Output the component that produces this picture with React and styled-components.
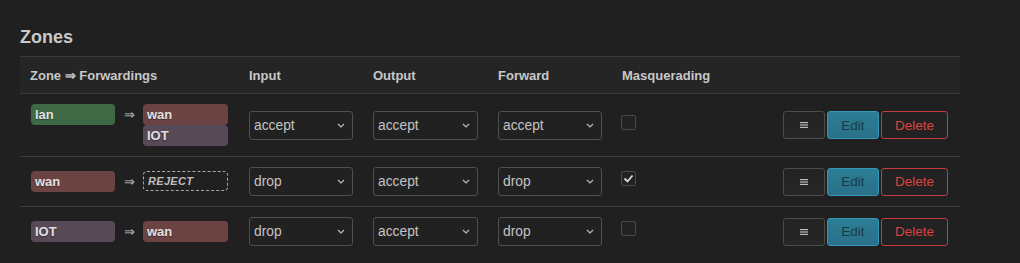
import React from "react";
import styled, { createGlobalStyle } from "styled-components";

const GlobalStyle = createGlobalStyle`
  html, body {
    margin: 0;
    padding: 0;
    background: #202020;
    font-family: "Liberation Sans", Arial, sans-serif;
    color: #ccc;
  }
`

const Page = styled.div`
  padding: 26px 60px 0 20px;
  width: 940px;
`

const Heading = styled.h3`
  margin: 0 0 8px 0;
  font-size: 18px;
  font-weight: bold;
  color: #c9c9c9;
  line-height: 22px;
`

const Table = styled.div`
  display: grid;
  grid-template-columns: 219px 124px 125px 124px 150px 1fr;
  border-top: 1px solid #3b3b3b;
`

const HeadCell = styled.div`
  background: #252525;
  height: 36px;
  display: flex;
  align-items: center;
  padding-left: 10px;
  font-size: 13px;
  font-weight: bold;
  color: #c8c8c8;
  border-bottom: 1px solid #3b3b3b;
`

const Cell = styled.div`
  display: flex;
  align-items: center;
  padding: 10px 0 10px 10px;
  border-bottom: ${p => (p.$last ? "none" : "1px solid #3b3b3b")};
  justify-content: ${p => (p.$right ? "flex-end" : "flex-start")};
  padding-right: ${p => (p.$right ? "12px" : "0")};
`

const Forward = styled.div`
  display: flex;
  align-items: flex-start;
  margin-left: 1px;
`

const Badge = styled.div`
  width: ${p => p.$w || 84}px;
  height: 21px;
  box-sizing: border-box;
  border-radius: 4px;
  background: ${p => p.$color};
  color: #e0e0e0;
  font-size: 13px;
  font-weight: bold;
  padding-left: 4px;
  display: flex;
  align-items: center;
  text-shadow: 0 1px 1px rgba(0, 0, 0, 0.35);
`

const Arrow = styled.span`
  width: 28px;
  text-align: center;
  font-size: 13px;
  color: #bbb;
  line-height: 21px;
`

const Stack = styled.div`
  display: flex;
  flex-direction: column;
`

const Reject = styled.div`
  width: 85px;
  height: 20px;
  box-sizing: border-box;
  border: 1px dashed #a8a8a8;
  border-radius: 4px;
  font-size: 11px;
  font-style: italic;
  font-weight: bold;
  color: #bdbdbd;
  padding-left: 4px;
  display: flex;
  align-items: center;
  letter-spacing: 0.3px;
`

const SelectBox = styled.div`
  width: ${p => p.$w || 104}px;
  height: 29px;
  box-sizing: border-box;
  border: 1px solid #4f4f4f;
  border-radius: 3px;
  background: #212121;
  display: flex;
  align-items: center;
  justify-content: space-between;
  padding: 0 7px 0 4px;
  font-size: 13.8px;
  color: #c4c4c4;
`

const Check = styled.div`
  width: 15px;
  height: 15px;
  box-sizing: border-box;
  border: 1px solid #4a4a4a;
  border-radius: 2px;
  background: #222;
  display: flex;
  align-items: center;
  justify-content: center;
  margin-top: -6px;
  margin-left: -1px;
`

const Buttons = styled.div`
  display: flex;
  gap: 2px;
`

const Button = styled.button`
  height: 28px;
  box-sizing: border-box;
  border-radius: 3px;
  font-family: "Liberation Sans", Arial, sans-serif;
  font-size: 13.5px;
  padding: 0;
  width: ${p => p.$w}px;
  border: 1px solid ${p => p.$border};
  background: ${p => p.$bg};
  color: ${p => p.$fg};
  display: flex;
  align-items: center;
  justify-content: center;
`

const Chevron = () => (
  <svg width="8" height="5" viewBox="0 0 8 5">
    <path d="M1 1l3 3 3-3" fill="none" stroke="#bbb" strokeWidth="1.2" />
  </svg>
)

const Tick = () => (
  <svg width="11" height="9" viewBox="0 0 11 9">
    <path d="M1.5 4.5l3 3 5-6" fill="none" stroke="#d8d8d8" strokeWidth="1.8" />
  </svg>
)

const MenuIcon = () => (
  <svg width="8" height="6" viewBox="0 0 8 6">
    <rect x="0" y="0" width="8" height="1.2" fill="#bbb" />
    <rect x="0" y="2.4" width="8" height="1.2" fill="#bbb" />
    <rect x="0" y="4.8" width="8" height="1.2" fill="#bbb" />
  </svg>
)

const Select = ({ value, w }) => (
  <SelectBox $w={w}>
    {value}
    <Chevron />
  </SelectBox>
)

const zoneColors = {
  lan: "#3e6944",
  wan: "#6b4343",
  IOT: "#574a56",
}

const rows = [
  { zone: "lan", fwd: ["wan", "IOT"], input: "accept", output: "accept", forward: "accept", masq: false },
  { zone: "wan", fwd: null, input: "drop", output: "accept", forward: "drop", masq: true },
  { zone: "IOT", fwd: ["wan"], input: "drop", output: "accept", forward: "drop", masq: false },
]

const Actions = () => (
  <Buttons>
    <Button $w={42} $border="#4c4c4c" $bg="linear-gradient(#232323, #262626)" $fg="#ccc">
      <MenuIcon />
    </Button>
    <Button $w={52} $border="#3598b8" $bg="linear-gradient(#2b7e96, #2a7089)" $fg="#1b3a46">
      Edit
    </Button>
    <Button $w={67} $border="#c43c3c" $bg="#222" $fg="#d84545">
      Delete
    </Button>
  </Buttons>
)

export default function App() {
  return (
    <>
      <GlobalStyle />
      <Page>
        <Heading>Zones</Heading>
        <Table>
          <HeadCell>Zone ⇒ Forwardings</HeadCell>
          <HeadCell>Input</HeadCell>
          <HeadCell>Output</HeadCell>
          <HeadCell>Forward</HeadCell>
          <HeadCell>Masquerading</HeadCell>
          <HeadCell />
          {rows.map((r, i) => {
            const last = i === rows.length - 1
            return (
              <React.Fragment key={i}>
                <Cell $last={last}>
                  <Forward>
                    <Badge $color={zoneColors[r.zone]}>{r.zone}</Badge>
                    <Arrow>⇒</Arrow>
                    {r.fwd ? (
                      <Stack>
                        {r.fwd.map(f => (
                          <Badge key={f} $w={85} $color={zoneColors[f]}>
                            {f}
                          </Badge>
                        ))}
                      </Stack>
                    ) : (
                      <Reject>REJECT</Reject>
                    )}
                  </Forward>
                </Cell>
                <Cell $last={last}>
                  <Select value={r.input} w={104} />
                </Cell>
                <Cell $last={last}>
                  <Select value={r.output} w={105} />
                </Cell>
                <Cell $last={last}>
                  <Select value={r.forward} w={104} />
                </Cell>
                <Cell $last={last}>
                  <Check>{r.masq && <Tick />}</Check>
                </Cell>
                <Cell $last={last} $right>
                  <Actions />
                </Cell>
              </React.Fragment>
            )
          })}
        </Table>
      </Page>
    </>
  )
}
